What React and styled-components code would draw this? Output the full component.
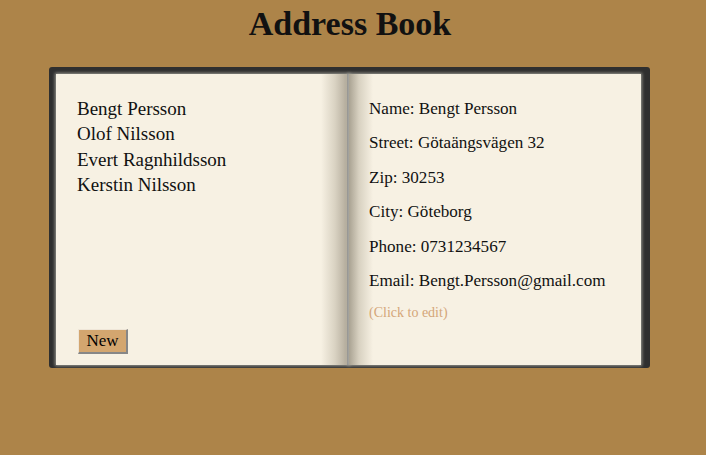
import React, { useState } from 'react';
import styled, { createGlobalStyle } from 'styled-components';

const GlobalStyle = createGlobalStyle`
	body {
		margin: 0;
		background: #ad8449;
		font-family: 'Liberation Serif', 'Times New Roman', serif;
		color: #111;
	}
`;

const Wrapper = styled.div`
	width: 700px;
`;

const Title = styled.h1`
	margin: 4px 0 0;
	font-size: 34px;
	line-height: 39px;
	font-weight: bold;
	text-align: center;
`;

const Book = styled.div`
	box-sizing: border-box;
	width: 601px;
	height: 301px;
	margin: 24px 0 0 49px;
	padding: 7px 9px 3px 7px;
	background: #2f2f2f;
	border-radius: 3px;
	display: flex;
`;

const Page = styled.div`
	box-sizing: border-box;
	height: 100%;
	display: flex;
	flex-direction: column;
	box-shadow: 0 0 3px 1px rgba(190, 188, 178, 0.75);
`;

const LeftPage = styled(Page)`
	width: 293px;
	padding: 22px 0 11px 21px;
	border-right: 2px solid #8b8b8b;
	background: linear-gradient(
		to right,
		#f7f1e3 0,
		#f7f1e3 calc(100% - 26px),
		#d9d2c2 calc(100% - 12px),
		#b3ab9b 100%
	);
`;

const RightPage = styled(Page)`
	width: 292px;
	padding: 25px 0 0 20px;
	gap: 14.4px;
	background: linear-gradient(
		to right,
		#a9a292 0,
		#d8d1c1 10px,
		#f7f1e3 24px,
		#f7f1e3 100%
	);
`;

const NameList = styled.ul`
	list-style: none;
	margin: 0;
	padding: 0;
	flex: 1;
`;

const NameItem = styled.li`
	font-size: 19px;
	line-height: 25.3px;
	cursor: pointer;
	text-decoration: ${(p) => (p.$active ? 'none' : 'none')};
`;

const NewButton = styled.button`
	box-sizing: border-box;
	align-self: flex-start;
	width: 50px;
	height: 25px;
	margin-left: 1px;
	padding: 0;
	background: #d3a66f;
	border-style: solid;
	border-width: 1px 2px 2px 1px;
	border-color: #efe6d8 #878787 #878787 #efe6d8;
	font-family: 'Liberation Serif', 'Times New Roman', serif;
	font-size: 17px;
	color: #000;
	cursor: pointer;
`;

const Field = styled.div`
	font-size: 17.1px;
	line-height: 20px;
`;

const EditHint = styled.div`
	font-size: 14px;
	line-height: 15px;
	color: #d4a679;
`;

const contacts = [
	{
		name: 'Bengt Persson',
		street: 'Götaängsvägen 32',
		zip: '30253',
		city: 'Göteborg',
		phone: '0731234567',
		email: 'Bengt.Persson@gmail.com',
	},
	{ name: 'Olof Nilsson' },
	{ name: 'Evert Ragnhildsson' },
	{ name: 'Kerstin Nilsson' },
];

const App = () => {
	const [selected, setSelected] = useState(0);
	const c = contacts[selected];

	return (
		<Wrapper>
			<GlobalStyle />
			<Title>Address Book</Title>
			<Book>
				<LeftPage>
					<NameList>
						{contacts.map((p, i) => (
							<NameItem key={p.name} $active={i === selected} onClick={() => setSelected(i)}>
								{p.name}
							</NameItem>
						))}
					</NameList>
					<NewButton>New</NewButton>
				</LeftPage>
				<RightPage>
					<Field>Name: {c.name}</Field>
					<Field>Street: {c.street}</Field>
					<Field>Zip: {c.zip}</Field>
					<Field>City: {c.city}</Field>
					<Field>Phone: {c.phone}</Field>
					<Field>Email: {c.email}</Field>
					<EditHint>(Click to edit)</EditHint>
				</RightPage>
			</Book>
		</Wrapper>
	);
};

export default App;
